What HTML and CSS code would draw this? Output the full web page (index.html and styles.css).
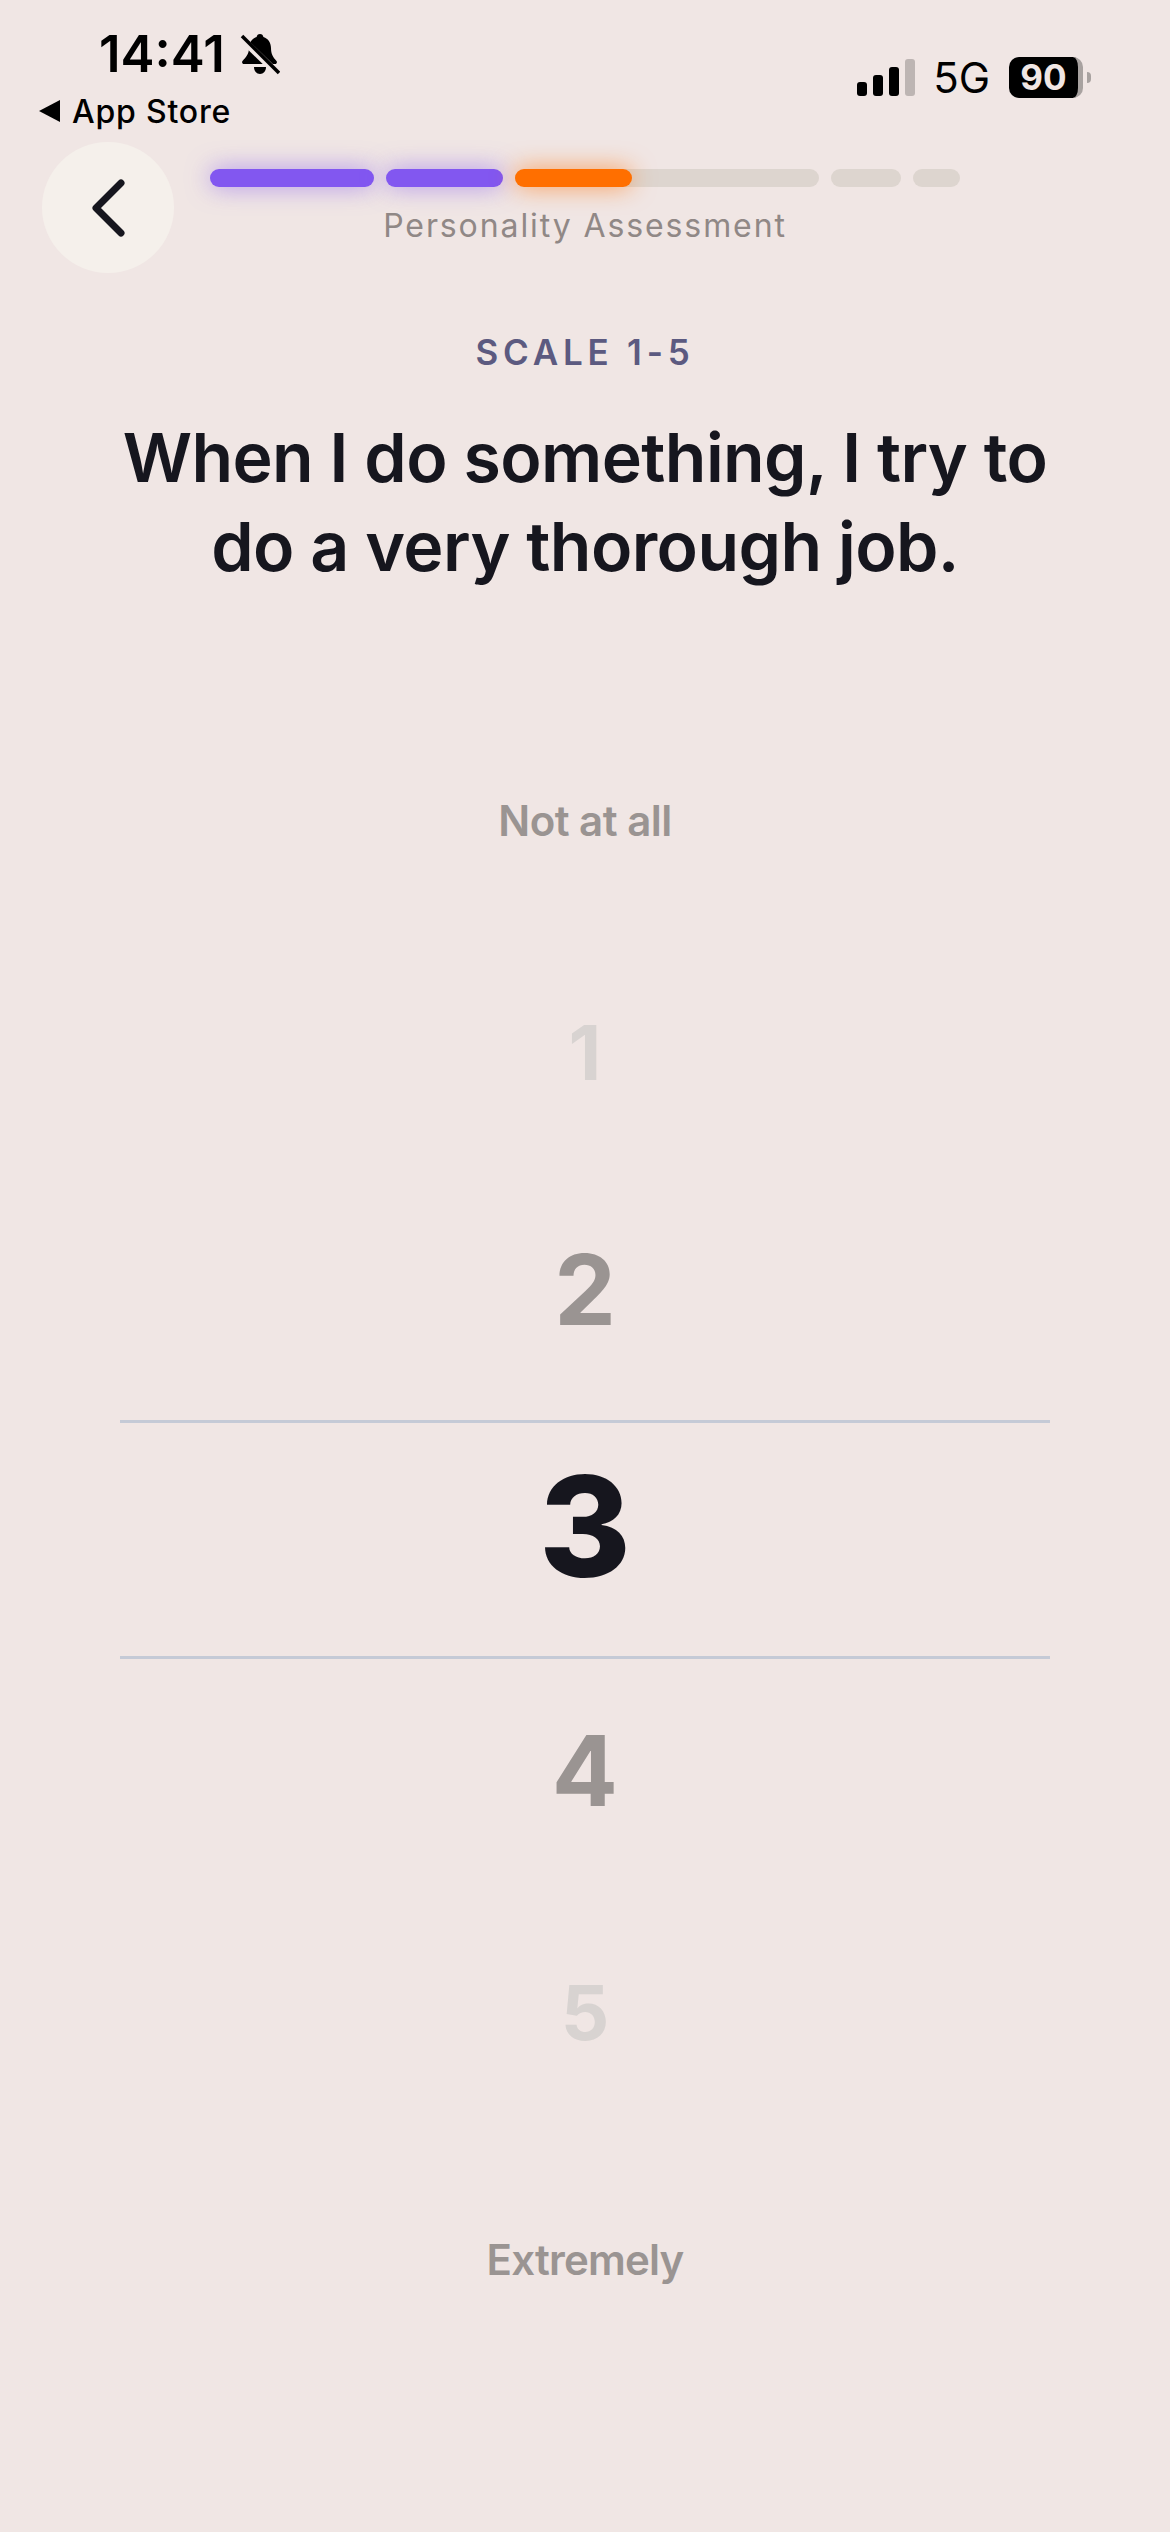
FILE: index.html
```html
<!DOCTYPE html>
<html lang="en">
<head>
    <meta charset="UTF-8">
    <meta name="viewport" content="width=device-width, initial-scale=1.0">
    <title>Personality Assessment</title>
    <link rel="stylesheet" href="styles.css">
</head>
<body>

    <div class="screen">
        <!-- status bar -->
        <div class="status-bar">
            <div class="status-left">
                <div class="time-row">
                    <span class="time">14:41</span>
                    <svg class="bell" viewBox="0 0 40 42" width="40" height="42">
                        <path d="M20 1c2 0 3 1 3.400 3 5 1.500 7.600 6 7.600 11 0 6 2 9 5.500 13 1 1.500 0 3-1.500 3H4c-1.500 0-2.500-1.500-1.500-3C6 24 9 21 9 15c0-5 2.600-9.500 7.600-11C17 2 18 1 20 1z" fill="#000"/>
                        <path d="M14 34h12c0 4-2.500 7-6 7s-6-3-6-7z" fill="#000"/>
                        <path d="M1 5l37 36" stroke="#f0e6e4" stroke-width="7" fill="none"/>
                        <path d="M2 3l37 37" stroke="#000" stroke-width="3.500" fill="none"/>
                    </svg>
                </div>
                <div class="back-app">
                    <span class="back-arrow"></span>
                    <span class="back-app-name">App Store</span>
                </div>
            </div>
            <div class="status-right">
                <div class="signal">
                    <span class="signal-bar bar-1"></span>
                    <span class="signal-bar bar-2"></span>
                    <span class="signal-bar bar-3"></span>
                    <span class="signal-bar bar-4"></span>
                </div>
                <span class="network">5G</span>
                <div class="battery">
                    <div class="battery-body">90</div>
                    <span class="battery-nub"></span>
                </div>
            </div>
        </div>

        <!-- header with back button and progress -->
        <div class="header">
            <div class="back-btn">
                <svg viewBox="0 0 36 58" width="36" height="58">
                    <path d="M31 4L6 29l25 25" fill="none" stroke="#16161e" stroke-width="7" stroke-linecap="round" stroke-linejoin="round"/>
                </svg>
            </div>
            <div class="progress-col">
                <div class="progress">
                    <div class="seg seg-done seg-1"></div>
                    <div class="seg seg-done seg-2"></div>
                    <div class="seg seg-3"><div class="seg-fill"></div></div>
                    <div class="seg seg-4"></div>
                    <div class="seg seg-5"></div>
                </div>
                <div class="progress-label">Personality Assessment</div>
            </div>
        </div>

        <div class="scale-label">SCALE 1-5</div>
        <h1 class="question">When I do something, I try to<br>do a very thorough job.</h1>

        <div class="end-label label-top">Not at all</div>

        <!-- number picker -->
        <div class="wheel">
            <div class="wheel-row row-far">1</div>
            <div class="wheel-row row-near">2</div>
            <div class="wheel-row row-selected">3</div>
            <div class="wheel-row row-near row-after">4</div>
            <div class="wheel-row row-far row-last">5</div>
        </div>

        <div class="end-label label-bottom">Extremely</div>
    </div>

</body>
</html>
```

FILE: styles.css
```css
* {
    box-sizing: border-box;
}

body {
    margin: 0;
    padding: 0;
    background-color: #f0e6e4;
    font-family: Inter, "Liberation Sans", sans-serif;
}

.screen {
    width: 1170px;
    height: 2532px;
    overflow: hidden;
    background-color: #f0e6e4;
}

/* status bar */
.status-bar {
    display: flex;
    justify-content: space-between;
    height: 142px;
    color: #000;
}

.status-left {
    padding-top: 30px;
    padding-left: 39px;
}

.time-row {
    display: flex;
    align-items: center;
    height: 48px;
    padding-left: 60px;
}

.time {
    font-size: 51px;
    font-weight: 600;
    line-height: 48px;
}

.bell {
    margin-left: 15px;
}

.back-app {
    display: flex;
    align-items: center;
    margin-top: 15px;
    height: 36px;
}

.back-arrow {
    width: 0;
    height: 0;
    border-top: 11px solid transparent;
    border-bottom: 11px solid transparent;
    border-right: 21px solid #000;
}

.back-app-name {
    margin-left: 12px;
    font-size: 32px;
    font-weight: 500;
    letter-spacing: 0.8px;
}

.status-right {
    display: flex;
    align-items: flex-end;
    height: 98px;
    padding-top: 57px;
    padding-right: 79px;
}

.signal {
    display: flex;
    align-items: flex-end;
    gap: 6px;
    height: 37px;
    margin-bottom: 2px;
}

.signal-bar {
    width: 10px;
    background-color: #000;
    border-radius: 3px;
}

.bar-1 { height: 14px; }
.bar-2 { height: 21px; }
.bar-3 { height: 29px; }
.bar-4 { height: 37px; background-color: #bdb5b3; }

.network {
    margin-left: 18px;
    font-size: 42px;
    font-weight: 400;
    line-height: 41px;
}

.battery {
    display: flex;
    align-items: center;
    height: 41px;
    margin-left: 19px;
}

.battery-body {
    width: 74px;
    height: 41px;
    border-radius: 10px;
    background-color: #000;
    border-right: 5px solid #a8a2a0;
    color: #f0e6e4;
    font-size: 35px;
    font-weight: 700;
    line-height: 41px;
    text-align: center;
}

.battery-nub {
    width: 4px;
    height: 11px;
    margin-left: 4px;
    background-color: #a8a2a0;
    border-radius: 0 4px 4px 0;
}

/* header */
.header {
    display: grid;
    grid-template-columns: 210px 750px 210px;
    height: 131px;
}

.back-btn {
    display: flex;
    align-items: center;
    justify-content: center;
    width: 132px;
    height: 131px;
    margin-left: 42px;
    border-radius: 50%;
    background-color: #f5f0eb;
}

.progress-col {
    padding-top: 27px;
}

.progress {
    display: flex;
    gap: 12px;
    height: 18px;
}

.seg {
    height: 18px;
    border-radius: 9px;
    background-color: #ddd5cf;
}

.seg-done {
    background-color: #8257f0;
    box-shadow: 0 0 24px rgba(130, 87, 240, 0.6);
}

.seg-1 { width: 164px; }
.seg-2 { width: 117px; }
.seg-3 { width: 304px; }
.seg-4 { width: 70px; }
.seg-5 { width: 47px; }

.seg-fill {
    width: 117px;
    height: 18px;
    border-radius: 9px;
    background-color: #ff6f00;
    box-shadow: 0 0 24px rgba(255, 111, 0, 0.65);
}

.progress-label {
    margin-top: 19px;
    color: #908886;
    font-size: 32px;
    line-height: 40px;
    letter-spacing: 1.9px;
    text-align: center;
}

/* question */
.scale-label {
    margin-top: 59px;
    color: #5c5a80;
    font-size: 35px;
    font-weight: 600;
    line-height: 40px;
    letter-spacing: 4.8px;
    text-align: center;
}

.question {
    margin: 41px 0 0;
    color: #16161e;
    font-size: 68px;
    font-weight: 600;
    line-height: 89px;
    letter-spacing: -0.6px;
    text-align: center;
}

.end-label {
    color: #9a9492;
    font-size: 42px;
    font-weight: 600;
    line-height: 50px;
    letter-spacing: -0.5px;
    text-align: center;
}

.label-top {
    margin-top: 205px;
}

.label-bottom {
    margin-top: 108px;
    letter-spacing: -0.8px;
}

/* wheel */
.wheel {
    margin-top: 87px;
}

.wheel-row {
    display: flex;
    align-items: center;
    justify-content: center;
    height: 238px;
    font-weight: 700;
    line-height: 1;
}

.row-far {
    color: #d8d3d1;
    font-size: 76px;
}

.row-near {
    color: #9a9492;
    font-size: 98px;
}

.row-selected {
    height: 239px;
    margin: 11px 120px 0;
    padding-bottom: 28px;
    border-top: 3px solid #c5cad6;
    border-bottom: 3px solid #c5cad6;
    color: #16161e;
    font-size: 140px;
    font-weight: 800;
}

.row-after {
    padding-bottom: 14px;
}

.row-last {
    height: 230px;
}
```
